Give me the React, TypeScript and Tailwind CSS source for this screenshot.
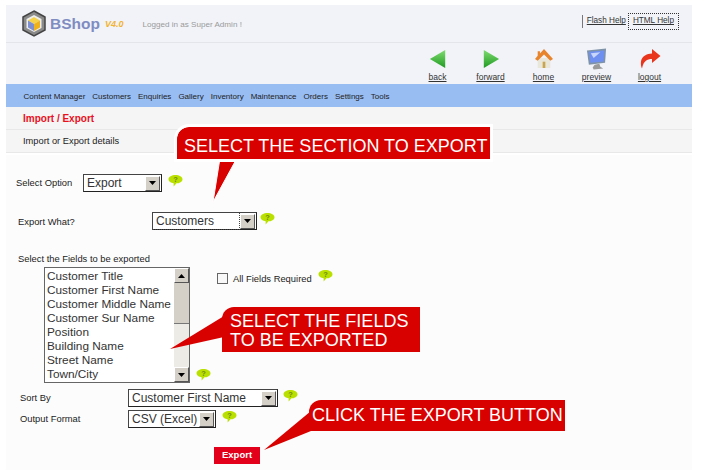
import React from 'react';

const NAV_ITEMS = ['Content Manager', 'Customers', 'Enquiries', 'Gallery', 'Inventory', 'Maintenance', 'Orders', 'Settings', 'Tools'];
const FIELDS = ['Customer Title', 'Customer First Name', 'Customer Middle Name', 'Customer Sur Name', 'Position', 'Building Name', 'Street Name', 'Town/City'];

function HelpIcon() {
  return (
    <svg width="15" height="14" viewBox="0 0 16 15" className="shrink-0">
      <path d="M8 1C12 1 15.500 2.800 15.500 5.500C15.500 8.200 12 10 9 10L6 13.500L6 9.800C3 9.400 .5 8 .5 5.500C.5 2.800 4 1 8 1Z" fill="#b9e000" />
      <text x="8" y="8.500" textAnchor="middle" fontSize="8" fontWeight="700" fill="#6f8a10" fontFamily="Liberation Sans">?</text>
    </svg>
  );
}

function ArrowButton({ up }: { up?: boolean }) {
  return (
    <div className="w-[15px] h-[15px] shrink-0 bg-[#d4d0c8] border border-t-white border-l-white border-r-[#555] border-b-[#555] flex items-center justify-center">
      <svg width="7" height="4" viewBox="0 0 7 4">
        <path d={up ? 'M3.500 0L7 4H0Z' : 'M0 0H7L3.500 4Z'} fill="#000" />
      </svg>
    </div>
  );
}

function Combo({ value, width, focused }: { value: string; width: string; focused?: boolean }) {
  return (
    <div className={`${width} h-[18px] bg-white border border-[#444] border-b-[#222] border-r-[#222] flex items-center justify-between pl-[3px] pr-px text-[12px] text-[#333] shrink-0`}>
      <span className={focused ? 'outline-dotted outline-1 outline-[#444] -ml-[3px] pl-[3px] h-4 flex-1 flex items-center mr-px' : ''}>{value}</span>
      <ArrowButton />
    </div>
  );
}

function NavIcon({ label, children }: { label: string; children: React.ReactNode }) {
  return (
    <a className="w-[53px] flex flex-col items-center text-[8.500px] leading-[11px] text-[#333] underline">
      <div className="h-[26px] flex items-center justify-center">{children}</div>
      <span>{label}</span>
    </a>
  );
}

function Logo() {
  return (
    <svg width="24" height="27" viewBox="0 0 24 27" className="shrink-0">
      <path d="M12 1L23 7V20L12 26L1 20V7Z" fill="#8a8a8a" stroke="#444" strokeWidth="1.500" />
      <path d="M12 5L19.500 9V18L12 22L4.500 18V9Z" fill="#eeeeee" />
      <path d="M12 7L18 10.500L12 14L6 10.500Z" fill="#f6d24a" />
      <path d="M6 10.500L12 14V21L6 17.500Z" fill="#7d8fd0" />
      <path d="M18 10.500L12 14V21L18 17.500Z" fill="#efb21c" />
    </svg>
  );
}

export default function App() {
  return (
    <div className="relative w-[702px] h-[470px] bg-white pl-[6px] pt-[5px] overflow-hidden font-['Liberation_Sans',Arial,sans-serif]">
      <div className="w-[686px] h-[465px] flex flex-col">
        {/* Top header */}
        <div className="h-[38px] bg-[#f1f3f8] border-b border-[#e4e5ea] flex items-center pl-[16px] pr-[13px] shrink-0">
          <Logo />
          <span className="ml-[4px] text-[15.500px] font-bold text-[#7f8cc2]">BShop</span>
          <span className="ml-[5px] mt-[3px] text-[9px] font-bold italic text-[#f2b431]">V4.0</span>
          <span className="ml-[19px] mt-[3px] text-[8.100px] text-[#9a9a9a]">Logged in as Super Admin !</span>
          <div className="ml-auto mt-[-4px] flex items-center text-[8.200px] text-[#333]">
            <span className="border-l border-[#777] pl-[4px] mr-[2px] underline">Flash Help</span>
            <span className="border border-dotted border-[#333] px-[4px] py-[1px] underline">HTML Help</span>
          </div>
        </div>

        {/* Toolbar */}
        <div className="h-[41px] bg-[#f1f3f8] flex justify-end items-start pr-[16px] pt-[3px] shrink-0">
          <NavIcon label="back">
            <svg width="18" height="18" viewBox="0 0 18 20">
              <defs>
                <linearGradient id="g1" x1="0" y1="0" x2="0" y2="1"><stop offset="0" stopColor="#7fdc70" /><stop offset="1" stopColor="#1f9a22" /></linearGradient>
              </defs>
              <path d="M17 0V20L0 10Z" fill="url(#g1)" />
            </svg>
          </NavIcon>
          <NavIcon label="forward">
            <svg width="18" height="18" viewBox="0 0 18 20">
              <path d="M1 0V20L18 10Z" fill="url(#g1)" />
            </svg>
          </NavIcon>
          <NavIcon label="home">
            <svg width="18" height="22" viewBox="0 0 20 22">
              <path d="M3 10H17V21H3Z" fill="#e9e6da" />
              <path d="M8.500 14H11.500V21H8.500Z" fill="#c9a550" />
              <path d="M10 0L20 11L17 13L10 6L3 13L0 11L3 7.500V2.500H5.500V5Z" fill="#e8842c" />
            </svg>
          </NavIcon>
          <NavIcon label="preview">
            <svg width="21" height="23" viewBox="0 0 22 23">
              <path d="M1 2L21 0L20 15L3 17Z" fill="#7f93a8" />
              <path d="M3 3.500L19.500 2L18.500 13.500L4.500 15Z" fill="#6f8ff0" />
              <path d="M5 5L15 4L8 10Z" fill="#c9d6fb" />
              <path d="M9 17L14 16L15 19L18 21L8 22L7 20Z" fill="#9a9a9a" />
            </svg>
          </NavIcon>
          <NavIcon label="logout">
            <svg width="22" height="20" viewBox="0 0 22 20">
              <path d="M13 0L21.500 7L13 14V10C8 10 4.500 12 3 19.500C.5 13 2 5 13 4.500Z" fill="#e8351c" />
            </svg>
          </NavIcon>
        </div>

        {/* Main nav */}
        <div className="h-[23px] bg-[#98bdf3] flex items-center gap-[7px] pl-[17.500px] pt-[3px] text-[8px] text-[#222] shrink-0">
          {NAV_ITEMS.map((item) => (
            <span key={item}>{item}</span>
          ))}
        </div>

        {/* Page title */}
        <div className="h-[23px] bg-[#f5f5f5] border-b border-[#e8e8e8] flex items-center pl-[17px] text-[10px] font-bold text-[#e8101c] shrink-0">
          Import / Export
        </div>
        <div className="h-[23px] bg-[#f5f5f5] border-b border-[#e8e8e8] flex items-center pl-[17px] pt-[1px] text-[9.300px] text-[#222] shrink-0">
          Import or Export details
        </div>

        {/* Form body */}
        <div className="flex-1 mt-[2px] bg-[#fcfcfc] text-[9.400px] text-[#222] flex flex-col pt-[19px]">
          <div className="flex items-center h-[18px] pl-[10px]">
            <span className="w-[67px]">Select Option</span>
            <Combo value="Export" width="w-[79px]" />
            <div className="ml-[6px] -mt-[4px]"><HelpIcon /></div>
          </div>

          <div className="flex items-center h-[18px] pl-[12px] mt-[20px]">
            <span className="w-[134px] mt-[2px]">Export What?</span>
            <Combo value="Customers" width="w-[105px]" focused />
            <div className="ml-[3px] -mt-[4px]"><HelpIcon /></div>
          </div>

          <div className="pl-[12px] mt-[23px] h-[11px] leading-[11px]">Select the Fields to be exported</div>

          <div className="flex items-start pl-[38px] mt-[3px]">
            <div className="w-[146px] h-[116px] bg-white border border-[#666] flex shrink-0">
              <div className="flex-1 pl-[2px] pt-[1px] text-[11.800px] leading-[14px] text-[#333]">
                {FIELDS.map((f) => (
                  <div key={f}>{f}</div>
                ))}
              </div>
              <div className="w-[15px] bg-[#ecebe6] flex flex-col justify-between">
                <div>
                  <ArrowButton up />
                  <div className="h-[41px] bg-[#d4d0c8] border-b border-[#777]" />
                </div>
                <ArrowButton />
              </div>
            </div>
            <div className="self-end ml-[6px] mb-[1px]"><HelpIcon /></div>
            <div className="ml-[6px] mt-[3px] flex items-center">
              <input type="checkbox" readOnly className="appearance-none w-[11px] h-[11px] bg-[#f8f8f8] border border-[#666] shrink-0" />
              <span className="ml-[5px] mt-[2px]">All Fields Required</span>
              <div className="ml-[6px] -mt-[5px]"><HelpIcon /></div>
            </div>
          </div>

          <div className="flex items-center h-[18px] pl-[14px] mt-[6px]">
            <span className="w-[108px]">Sort By</span>
            <Combo value="Customer First Name" width="w-[150px]" />
            <div className="ml-[5px] -mt-[4px]"><HelpIcon /></div>
          </div>

          <div className="flex items-center h-[18px] pl-[14px] mt-[3px]">
            <span className="w-[108px]">Output Format</span>
            <Combo value="CSV (Excel)" width="w-[88px]" />
            <div className="ml-[6px] -mt-[4px]"><HelpIcon /></div>
          </div>

          <div className="pl-[208px] mt-[19px]">
            <button className="w-[46px] h-[17px] bg-[#e2001a] text-white text-[9.500px] font-bold flex items-center justify-center">Export</button>
          </div>
        </div>
      </div>

      {/* Instruction callouts */}
      <svg width="702" height="470" viewBox="0 0 702 470" className="absolute inset-0 pointer-events-none">
        <path d="M220 158L237 158L213 202Z" fill="#d90000" stroke="#fff" strokeWidth="1" />
        <path d="M224 316L170 349L224 337Z" fill="#d90000" />
        <path d="M311 411L264 450L311 431Z" fill="#d90000" />
      </svg>
      <div className="absolute left-[177px] top-[127px] w-[313px] h-[32px] bg-[#d90000] rounded-tl-[12px] text-white text-[18px] leading-[32px] pl-[7px] pt-[3px] outline-[3px] outline-white whitespace-nowrap">
        SELECT THE SECTION TO EXPORT
      </div>
      <div className="absolute left-[222px] top-[307px] w-[198px] h-[45px] bg-[#d90000] rounded-tl-[12px] text-white text-[18px] leading-[19px] pl-[8px] pt-[5px] whitespace-nowrap">
        SELECT THE FIELDS
        <br />
        TO BE EXPORTED
      </div>
      <div className="absolute left-[309px] top-[400px] w-[256px] h-[31px] bg-[#d90000] rounded-tl-[12px] text-white text-[18px] leading-[31px] pl-[3px] whitespace-nowrap">
        CLICK THE EXPORT BUTTON
      </div>
    </div>
  );
}
